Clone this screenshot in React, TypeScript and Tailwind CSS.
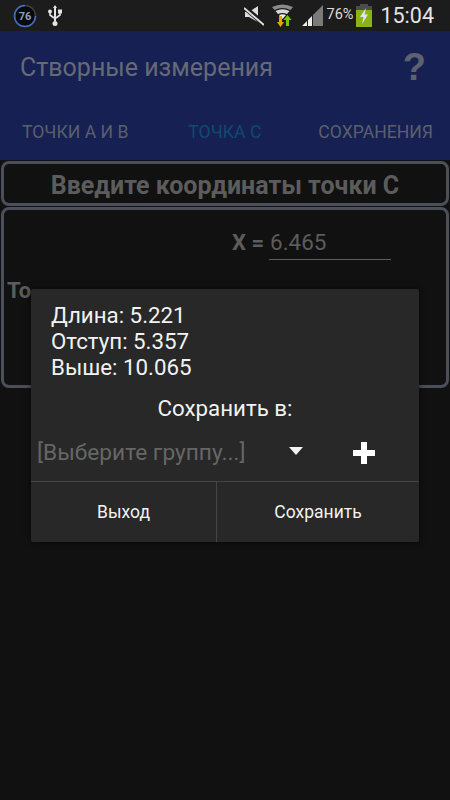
const font = "font-['Roboto',sans-serif]";

function StatusBar() {
  return (
    <div className="relative flex h-[31px] items-center bg-[#1c1c1c]">
      <svg width="24" height="24" viewBox="0 0 24 24" className="ml-[13px]">
        <circle cx="12" cy="12" r="10.5" fill="#06080c" stroke="#3a3f48" strokeWidth="1.5" />
        <path d="M22.500 12A10.500 10.500 0 1 1 12 1.500" fill="none" stroke="#3f6fc4" strokeWidth="1.5" />
        <text x="12" y="16" textAnchor="middle" fontSize="11" fontWeight="700" fill="#8fa0bd" fontFamily="Roboto, sans-serif">76</text>
      </svg>
      <svg width="16" height="24" viewBox="0 0 16 24" className="ml-[10px]">
        <path d="M8 1 10 4H9V17H7V4H6Z" fill="#e4e4e4" />
        <circle cx="8" cy="19.500" r="2.500" fill="#e4e4e4" />
        <path d="M3 8V11L7 14M13 8V11L9 14" fill="none" stroke="#e4e4e4" strokeWidth="1.6" />
        <circle cx="3" cy="7.500" r="2" fill="#e4e4e4" />
        <rect x="11" y="5.500" width="4" height="4" fill="#e4e4e4" />
      </svg>
      <div className="ml-auto flex items-center">
        <svg width="20" height="20" viewBox="0 0 20 20" className="mr-[8px]">
          <path d="M1 6H5L14 0V16L5 11H1Z" fill="#dcdcdc" />
          <path d="M0 1 20 18" stroke="#1c1c1c" strokeWidth="5" />
          <path d="M0 2 20 19" stroke="#dcdcdc" strokeWidth="2" />
        </svg>
        <svg width="22" height="24" viewBox="0 0 22 24" className="mr-[8px]">
          <path d="M0 3Q10.500 -2 21 3L18.500 6Q10.500 2 2.500 6Z" fill="#8a8a8a" />
          <path d="M3.500 7Q10.500 3.500 17.500 7L15 10Q10.500 8 6 10Z" fill="#d8d8d8" />
          <path d="M7 11Q10.500 9.500 14 11L10.500 15Z" fill="#eeeeee" />
          <path d="M7 12H10V18H12L8.500 23 5 18H7Z" fill="#e0a800" />
          <path d="M14 22H17V16H19.500L15.500 11 11.500 16H14Z" fill="#7cc400" />
        </svg>
        <svg width="21" height="21" viewBox="0 0 21 21" className="mr-[4px]">
          <path d="M11 10 21 0V21H11Z" fill="#7a7a7a" />
          <path d="M0 21 5 16V21ZM6 15 10 11V21H6Z" fill="#ededed" />
        </svg>
        <span className={`${font} mr-[3px] text-[14.5px] leading-none text-[#dcdcdc]`}>76%</span>
        <svg width="16" height="23" viewBox="0 0 16 23" className="mr-[8px]">
          <rect x="4" y="0" width="8" height="3" fill="#4c4c4c" />
          <rect x="0" y="2" width="16" height="5" fill="#4c4c4c" />
          <rect x="0" y="6" width="16" height="17" fill="#8ab318" />
          <path d="M10 4 4 13H7.500L6 20 12 10.500H8.500Z" fill="#e4e4e4" />
        </svg>
        <span className={`${font} mr-[16px] text-[21.5px] leading-none text-[#e4e4e4]`}>15:04</span>
      </div>
    </div>
  );
}

function AppBar() {
  return (
    <div className={`${font} h-[129px] bg-[#172052]`}>
      <div className="flex h-[74px] items-center pb-[2px] pl-[20px] pr-[24px]">
        <span className="text-[25px] leading-none text-[#666a75]">Створные измерения</span>
        <span className="ml-auto text-[38px] font-bold leading-none text-[#5e6270] font-['Liberation_Sans',sans-serif]">?</span>
      </div>
      <div className="flex h-[55px] items-start pt-[19px] text-[17.6px] leading-none">
        <span className="ml-[22px] text-[#5b5f6d]">ТОЧКИ А И В</span>
        <span className="ml-[60px] text-[#0f4a73]">ТОЧКА С</span>
        <span className="ml-auto mr-[17px] text-[#5b5f6d]">СОХРАНЕНИЯ</span>
      </div>
    </div>
  );
}

function Content() {
  return (
    <div className={`${font} mt-px flex flex-col gap-px px-px`}>
      <div className="flex h-[45px] items-center justify-center rounded-[8px] border-[3px] border-[#4b4f59] bg-[#111111] pt-[3px]">
        <span className="text-[25px] font-bold leading-none text-[#5c5c5c]">Введите координаты точки С</span>
      </div>
      <div className="h-[181px] rounded-[8px] border-[3px] border-[#4b4f59] bg-[#111111]">
        <div className="ml-[228px] mt-[19px] flex items-start">
          <span className="mt-[3px] text-[22px] font-bold leading-none text-[#5c5c5c]">X =</span>
          <div className="ml-[5px] h-[31px] w-[122px] border-b border-[#5c5c5c] pl-px pt-[2px] text-[22.4px] leading-none text-[#5c5c5c]">6.465</div>
        </div>
        <div className="ml-[3px] mt-[20px] text-[22px] font-bold leading-none text-[#5c5c5c]">То</div>
      </div>
    </div>
  );
}

function Dialog() {
  return (
    <div className={`${font} absolute left-[31px] top-[289px] w-[388px] rounded-[2px] bg-[#282828] shadow-[0_0_6px_rgba(0,0,0,0.6)]`}>
      <div className="pl-[20px] pt-[13px] text-[22.3px] leading-[26px] text-[#f2f2f2]">
        <div>Длина: 5.221</div>
        <div>Отступ: 5.357</div>
        <div>Выше: 10.065</div>
      </div>
      <div className="mt-[15px] text-center text-[22.3px] leading-[26px] text-[#f2f2f2]">Сохранить в:</div>
      <div className="flex h-[60px] items-center pt-[4px]">
        <span className="ml-[6px] text-[22.7px] leading-none text-[#666666]">[Выберите группу...]</span>
        <svg width="14" height="8" viewBox="0 0 14 8" className="ml-[44px] mb-[4px]">
          <path d="M0 0H14L7 8Z" fill="#f2f2f2" />
        </svg>
        <svg width="24" height="24" viewBox="0 0 24 24" className="ml-[49px]">
          <path d="M9 1H15V9H23V15H15V23H9V15H1V9H9Z" fill="#ffffff" />
        </svg>
      </div>
      <div className="flex h-[61px] border-t border-[#454545] text-[17.5px] leading-none text-[#f2f2f2]">
        <div className="flex w-[186px] items-center justify-center border-r border-[#454545] pt-[2px]">Выход</div>
        <div className="flex flex-1 items-center justify-center pt-[2px]">Сохранить</div>
      </div>
    </div>
  );
}

export default function App() {
  return (
    <div className="relative h-[800px] w-[450px] overflow-hidden bg-[#111111]">
      <StatusBar />
      <AppBar />
      <Content />
      <Dialog />
    </div>
  );
}
